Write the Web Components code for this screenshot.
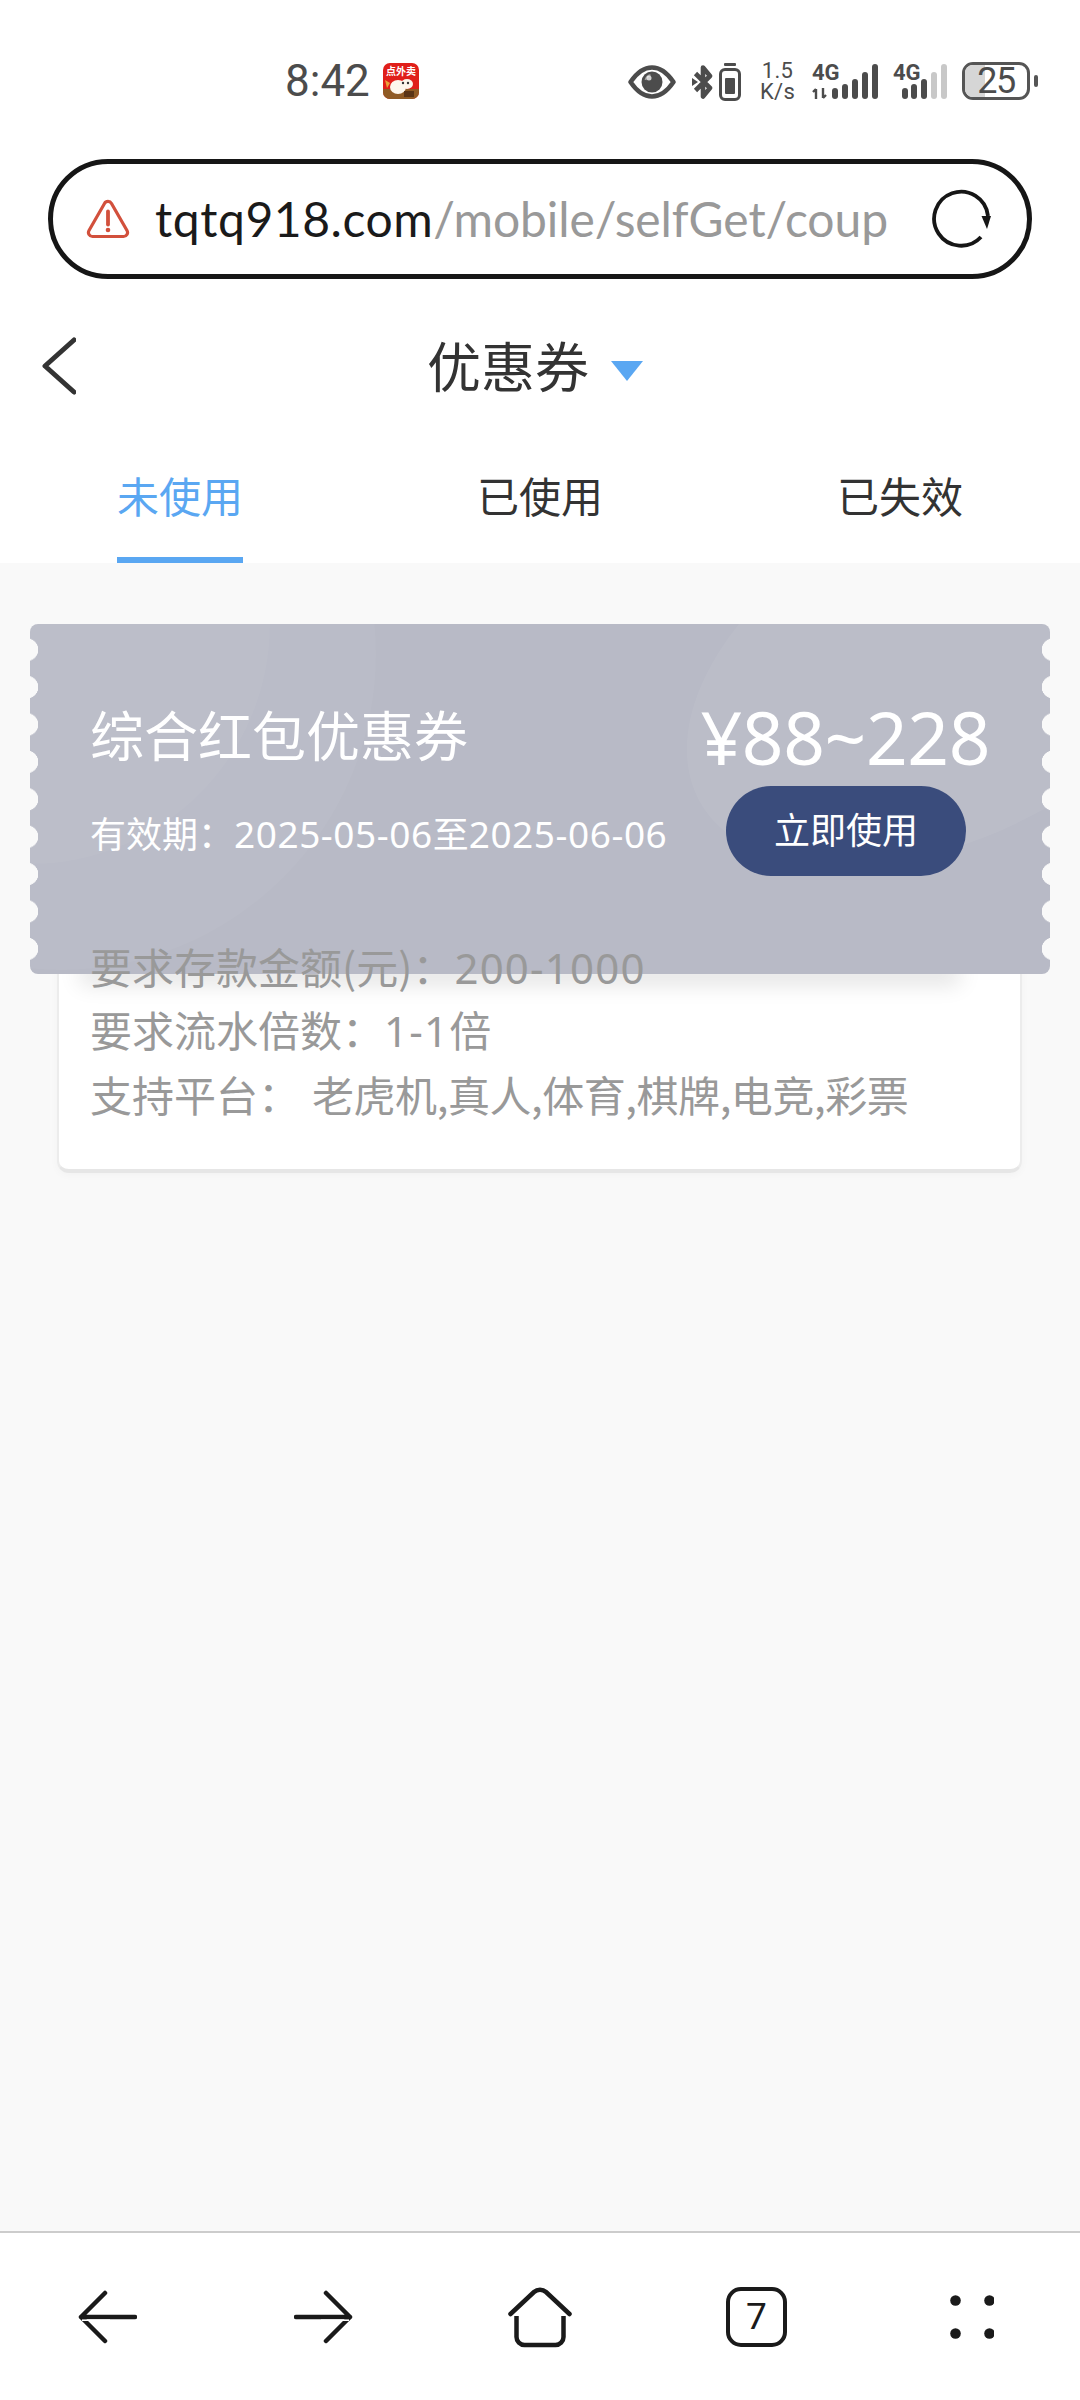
<!DOCTYPE html>
<html lang="zh">
<head>
<meta charset="utf-8">
<style>
html,body{margin:0;padding:0;background:#f9f9f9;}
body{width:1080px;height:2400px;font-family:"Noto Sans CJK SC","Noto Sans",sans-serif;}
app-shell{display:flex;flex-direction:column;width:1080px;height:2400px;}
</style>
</head>
<body>
<app-shell>
  <status-bar></status-bar>
  <url-bar></url-bar>
  <page-header></page-header>
  <coupon-tabs></coupon-tabs>
  <coupon-list>
    <coupon-card></coupon-card>
  </coupon-list>
  <browser-nav></browser-nav>
</app-shell>
<script>
function def(name, html){
  customElements.define(name, class extends HTMLElement{
    constructor(){super();this.attachShadow({mode:'open'}).innerHTML=html;}
  });
}
def('status-bar',`<style>
:host{display:block;height:154px;background:#fff;color:#4c4c4c;box-sizing:border-box;font-family:Roboto,sans-serif}
.row{display:flex;align-items:center;height:40px;padding:61px 42px 0 285px}
.time{font-size:44px;width:98px;line-height:40px;white-space:nowrap}
.right{margin-left:auto;display:flex;align-items:center}
svg{display:block;flex:none}
.sp{font-size:22px;line-height:21px;text-align:center;margin:0 17px 0 19px;width:35px;letter-spacing:.3px}
</style>
<div class="row"><span class="time">8:42</span>
<svg width="36" height="36" viewBox="0 0 36 36"><defs><clipPath id="ac"><rect width="36" height="36" rx="7"/></clipPath></defs><g clip-path="url(#ac)"><rect width="36" height="36" fill="#e01f1a"/><rect y="26" width="36" height="10" fill="#8f5a24"/><path d="M2 17l5 3-3 5Z" fill="#e9a33a"/><ellipse cx="15" cy="24" rx="8" ry="7" fill="#fdf6ec"/><ellipse cx="24" cy="21" rx="6" ry="5" fill="#fdf6ec"/><circle cx="25" cy="20" r="1.200" fill="#333"/><circle cx="20" cy="20" r="1.200" fill="#333"/><rect x="21" y="28" width="10" height="6" fill="#5a3416"/><text x="18" y="12" text-anchor="middle" font-family="Noto Sans CJK SC" font-size="10" font-weight="700" fill="#fff">点外卖</text></g></svg>
<div class="right">
<svg width="48" height="40" viewBox="0 0 48 40"><path d="M2.500 21C10 10 17 6.500 24 6.500S38 10 45.500 21C38 32 31 35.500 24 35.500S10 32 2.500 21Z" fill="none" stroke="#4c4c4c" stroke-width="4.500" stroke-linejoin="round"/><circle cx="24" cy="21" r="10.500" fill="#4c4c4c"/><path d="M17.500 19a7 7 0 0 1 5-5" stroke="#9a9a9a" stroke-width="2" fill="none"/><circle cx="21" cy="17" r="2.500" fill="#fff" opacity=".75"/></svg>
<svg style="margin-left:16px" width="21" height="40" viewBox="0 0 21 40"><path d="M3.500 12.500 18 27l-7 8.500V6.500L18 15 3.500 29.500" fill="none" stroke="#4c4c4c" stroke-width="4.600" stroke-linejoin="round"/><path d="M0 17l6 4-6 4Z" fill="#4c4c4c"/></svg>
<svg style="margin-left:6px" width="22" height="40" viewBox="0 0 22 40"><rect x="5" y="2" width="12" height="3" rx="1" fill="#4c4c4c"/><rect x="1.500" y="8.500" width="19" height="30" rx="4.500" fill="none" stroke="#4c4c4c" stroke-width="3"/><rect x="6" y="17" width="10" height="16" rx="1" fill="#4c4c4c"/></svg>
<div class="sp"><div>1.5</div><div>K/s</div></div>
<svg width="66" height="40" viewBox="0 0 66 40"><text x="0" y="19" font-family="Roboto" font-size="22" font-weight="700" fill="#4c4c4c">4G</text><path d="M4 38V28M1 31l3-3M11 27v10M14 34l-3 3" stroke="#4c4c4c" stroke-width="2.400" fill="none"/><rect x="20" y="27" width="6" height="11" rx="3" fill="#4c4c4c"/><rect x="30" y="23" width="6" height="15" rx="3" fill="#4c4c4c"/><rect x="40" y="18" width="6" height="20" rx="3" fill="#4c4c4c"/><rect x="50" y="11" width="6" height="27" rx="3" fill="#4c4c4c"/><rect x="60" y="3" width="6" height="35" rx="3" fill="#4c4c4c"/></svg>
<svg style="margin-left:15px" width="54" height="40" viewBox="0 0 54 40"><text x="0" y="19" font-family="Roboto" font-size="22" font-weight="700" fill="#4c4c4c">4G</text><rect x="9" y="27" width="6" height="11" rx="3" fill="#4c4c4c"/><rect x="18" y="23" width="6" height="15" rx="3" fill="#4c4c4c"/><rect x="28" y="18" width="6" height="20" rx="3" fill="#4c4c4c"/><rect x="38" y="11" width="6" height="27" rx="3" fill="#c8c8c8"/><rect x="48" y="3" width="6" height="35" rx="3" fill="#c8c8c8"/></svg>
<bat-tery style="margin-left:15px"></bat-tery>
</div></div>`);
def('bat-tery',`<style>
:host{display:block;position:relative;width:76px;height:38px;font-family:Roboto,sans-serif}
.b{position:absolute;left:0;top:0;width:68px;height:38px;box-sizing:border-box;border:3.500px solid #555;border-radius:11px;overflow:hidden}
.f{width:32%;height:100%;background:#d6d6d6}
.n{position:absolute;left:0;top:0;width:68px;text-align:center;line-height:38px;font-size:36px;letter-spacing:-1.500px;font-weight:400;color:#4c4c4c}
.t{position:absolute;left:72px;top:13px;width:4px;height:12px;border-radius:2px;background:#555}
</style><div class="b"><div class="f"></div></div><div class="n">25</div><div class="t"></div>`);
def('url-bar',`<style>
:host{display:block;background:#fff;padding:5px 48px 0;height:130px;box-sizing:border-box}
.pill{height:120px;box-sizing:border-box;border:5px solid #161616;border-radius:60px;display:flex;align-items:center;padding:0 36px 0 33px}
.warn{display:block;flex:none}
.txt{margin-left:25px;flex:none;white-space:nowrap;font-size:48px;letter-spacing:-.08px;line-height:62px;color:#999;font-family:Lato,"Open Sans",sans-serif}
.txt b{font-weight:400;color:#1a1a1a;letter-spacing:.55px}
.re{margin-left:auto;display:block}
</style><div class="pill">
<svg class="warn" width="44" height="40" viewBox="0 0 44 40"><path d="M18.500 4.500a4 4 0 0 1 7 0L41 31.500a4 4 0 0 1-3.500 6h-31a4 4 0 0 1-3.500-6Z" fill="none" stroke="#d2503c" stroke-width="3.200" stroke-linejoin="round"/><path d="M22 12.500v13" stroke="#d2503c" stroke-width="3.800" stroke-linecap="round"/><circle cx="22" cy="31" r="2.300" fill="#d2503c"/></svg>
<div class="txt"><b>tqtq918.com</b>/mobile/selfGet/coup</div>
<svg class="re" width="60" height="60" viewBox="0 0 60 60"><path d="M50 48A27 27 0 1 1 57 27" fill="none" stroke="#161616" stroke-width="3.800"/><path d="M50.500 27H60L56 40Z" fill="#161616"/></svg>
</div>`);
def('page-header',`<style>
:host{display:flex;align-items:center;justify-content:center;position:relative;height:164px;background:#fff;color:#333}
.back{position:absolute;left:40px;top:52px;display:block}
h1{margin:-3px 0 0 -10px;font-size:54px;font-weight:400;line-height:70px}
.tri{width:0;height:0;border-left:16px solid transparent;border-right:16px solid transparent;border-top:20px solid #5aa7f2;margin-left:22px;margin-top:10px}
</style>
<svg class="back" width="36" height="60" viewBox="0 0 36 60"><path d="M34 4 5 30l29 26" fill="none" stroke="#333" stroke-width="5" stroke-linecap="round" stroke-linejoin="round"/></svg>
<h1>优惠券</h1><div class="tri"></div>`);
def('coupon-tabs',`<style>
:host{display:grid;grid-template-columns:360px 360px 360px;height:115px;background:#fff}
.t{display:flex;flex-direction:column;align-items:center;font-size:42px;line-height:60px;color:#333;padding-top:17px;position:relative}
.t.on{color:#5aa7f2}
.t.on::after{content:"";position:absolute;left:117px;width:126px;height:6px;bottom:0;background:#5aa7f2}
</style><div class="t on">未使用</div><div class="t">已使用</div><div class="t">已失效</div>`);
def('coupon-list',`<style>
:host{display:block;flex:1;background:#f9f9f9;padding-top:61px}
</style><slot></slot>`);
def('coupon-card',`<style>
:host{display:block;position:relative;height:560px}
.sheet{position:absolute;left:57px;top:300px;width:965px;height:249px;box-sizing:border-box;background:#fff;border:2px solid #ececec;border-bottom:4px solid #e6e6e6;border-radius:12px;box-shadow:0 2px 8px rgba(0,0,0,.03)}
.ticket{position:absolute;left:30px;top:0;width:1020px;height:350px;background:#b8bac6;overflow:hidden;color:#fff;border-radius:8px}
.shade{position:absolute;left:80px;top:328px;width:880px;height:20px;box-shadow:0 12px 22px rgba(0,0,0,.12)}
.glow{position:absolute;border-radius:50%;background:rgba(255,255,255,.035)}
.scal{position:absolute;top:7.300px;height:337px;width:9px;background-repeat:repeat-y;background-size:9px 37.400px;background-image:radial-gradient(circle 11.500px at var(--cx) 18.700px,#f9f9f9 11px,transparent 11.500px)}
.l{left:0;--cx:-3px}.r{right:0;--cx:12px}
.title{position:absolute;left:60px;top:75px;font-size:54px;line-height:70px;white-space:nowrap}
.date{position:absolute;left:60px;top:184px;font-size:36px;line-height:48px;height:48px;white-space:nowrap}
.date i,.info i{font-style:normal;font-family:"Noto Sans",sans-serif}
.date i{font-size:37px;letter-spacing:.55px}
.info i{letter-spacing:1.200px}
.price{position:absolute;right:60px;top:68px;font-size:73px;letter-spacing:-.4px;line-height:90px;font-family:"Noto Sans","Noto Sans CJK SC",sans-serif;white-space:nowrap}
.btn{position:absolute;left:696px;top:162px;width:240px;height:90px;border-radius:45px;background:#3a4c7c;text-align:center;font-size:36px;line-height:84px}
.info{position:absolute;left:90px;top:311px;font-size:42px;color:#999;white-space:nowrap}
.info div{height:62.500px;line-height:62.500px}
.info div.last{padding-top:3px}
.info span{margin-left:12px;letter-spacing:-.45px}
</style>
<div class="sheet"></div>
<div class="shade"></div>
<div class="ticket">
  <div class="glow" style="left:-240px;top:-240px;width:480px;height:480px"></div>
  <div class="glow" style="left:-286px;top:-286px;width:632px;height:632px"></div>
  <div class="glow" style="left:635px;top:-130px;width:580px;height:340px;transform:rotate(-28deg);background:rgba(255,255,255,.05)"></div>
  <div class="scal l"></div><div class="scal r"></div>
  <div class="title">综合红包优惠券</div>
  <div class="date">有效期：<i>2025-05-06</i>至<i>2025-06-06</i></div>
  <div class="price">¥88~228</div>
  <div class="btn">立即使用</div>
</div>
<div class="info"><div>要求存款金额(元)：<i>200-1000</i></div><div>要求流水倍数：<i>1-1</i>倍</div><div class="last">支持平台：<span>老虎机,真人,体育,棋牌,电竞,彩票</span></div></div>`);
def('browser-nav',`<style>
:host{display:flex;height:169px;background:#fff;border-top:2px solid #ccc;align-items:center;padding:0 0 0 78px;box-sizing:border-box}
svg{display:block;flex:none}
.tab{font:400 37px Roboto,sans-serif;color:#1a1a1a;width:61px;height:60px;box-sizing:border-box;border:4.500px solid #1a1a1a;border-radius:15px;display:flex;align-items:center;justify-content:center;margin-left:154px}
</style>
<svg width="59" height="54" viewBox="0 0 59 54"><path d="M57 27H3M27 3 3 27l24 24" fill="none" stroke="#1a1a1a" stroke-width="4.500" stroke-linecap="round" stroke-linejoin="round"/><path d="M4 30.200h28" stroke="#fff" stroke-width="1.600"/></svg>
<svg style="margin-left:157px" width="59" height="54" viewBox="0 0 59 54"><path d="M2 27h54M32 3l24 24-24 24" fill="none" stroke="#1a1a1a" stroke-width="4.500" stroke-linecap="round" stroke-linejoin="round"/><path d="M27 30.200h28" stroke="#fff" stroke-width="1.600"/></svg>
<svg style="margin-left:155px" width="64" height="62" viewBox="0 0 64 62"><path d="M2.500 28 26 6a9 9 0 0 1 12 0l23.500 22" fill="none" stroke="#1a1a1a" stroke-width="4.500" stroke-linecap="round" stroke-linejoin="round"/><path d="M8.500 30V51a8 8 0 0 0 8 8h31a8 8 0 0 0 8-8V30" fill="none" stroke="#1a1a1a" stroke-width="4.500" stroke-linejoin="round"/></svg>
<div class="tab">7</div>
<svg style="margin-left:163px" width="44" height="44" viewBox="0 0 44 44"><circle cx="5.500" cy="5.500" r="5.300" fill="#1a1a1a"/><circle cx="39.500" cy="5.500" r="5.300" fill="#1a1a1a"/><circle cx="5.500" cy="38.500" r="5.300" fill="#1a1a1a"/><circle cx="39.500" cy="38.500" r="5.300" fill="#1a1a1a"/></svg>`);
</script>
</body>
</html>
